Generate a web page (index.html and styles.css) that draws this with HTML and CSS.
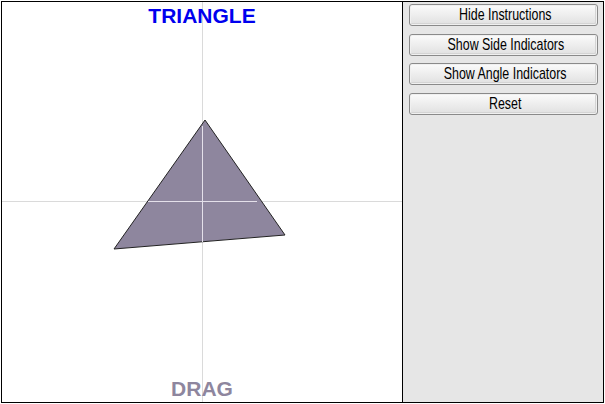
FILE: index.html
```html
<!DOCTYPE html>
<html>
<head>
  <title>Triangle</title>
  <link rel="stylesheet" href="styles.css">
</head>
<body>

  <div class="app">
    <div class="stage">
      <svg width="400" height="400" viewBox="0 0 400 400">
        <line x1="200.5" y1="0" x2="200.5" y2="400" class="axis"/>
        <line x1="0" y1="199.5" x2="400" y2="199.5" class="axis"/>
        <polygon points="203,118 112,247 283,233" class="shape"/>
        <line x1="200.5" y1="124" x2="200.5" y2="240" class="axis-over"/>
        <line x1="146" y1="199.5" x2="255" y2="199.5" class="axis-over"/>
        <text x="200" y="20.5" class="title">TRIANGLE</text>
        <text x="200" y="394" class="drag">DRAG</text>
      </svg>
    </div>

    <div class="panel">
      <button><span>Hide Instructions</span></button>
      <button><span>Show Side Indicators</span></button>
      <button><span>Show Angle Indicators</span></button>
      <button><span>Reset</span></button>
    </div>
  </div>

</body>
</html>
```

FILE: styles.css
```css
body {
  margin: 0;
  background: white;
  font-family: "Liberation Sans", Arial, sans-serif;
}
.app {
  display: flex;
  margin: 1px;
  width: 601px;
  height: 400px;
  border: 1px solid black;
}
.stage {
  width: 400px;
  height: 400px;
  background: white;
  border-right: 1px solid black;
}
.stage svg {
  display: block;
}
.axis {
  stroke: #dadada;
  stroke-width: 1;
}
.axis-over {
  stroke: #e4e0ea;
  stroke-width: 1;
}
.shape {
  fill: #8e869e;
  stroke: #222;
  stroke-width: 1;
}
.title {
  font-family: "Liberation Sans", Arial, sans-serif;
  font-weight: bold;
  font-size: 21px;
  fill: #0000ee;
  text-anchor: middle;
}
.drag {
  font-family: "Liberation Sans", Arial, sans-serif;
  font-weight: bold;
  font-size: 21px;
  fill: #8e869e;
  text-anchor: middle;
}
.panel {
  flex: 1;
  background: #e6e6e6;
  padding: 2px 5px 0 6px;
  display: flex;
  flex-direction: column;
  gap: 7.5px;
}
.panel button {
  height: 22px;
  width: 189px;
  padding: 0 0 0 4px;
  border: 1px solid #8a8a8a;
  border-radius: 3px;
  background: linear-gradient(#fbfbfb, #e0e0e0);
  box-shadow: inset 0 0 0 1px #f0f0f0, inset -1px -1px 0 1px #d4d4d4;
  font-family: "Liberation Sans", Arial, sans-serif;
  font-size: 17px;
  line-height: 20px;
  color: black;
  white-space: nowrap;
  overflow: hidden;
}
.panel button span {
  display: inline-block;
  transform: scaleX(0.73);
}
```
